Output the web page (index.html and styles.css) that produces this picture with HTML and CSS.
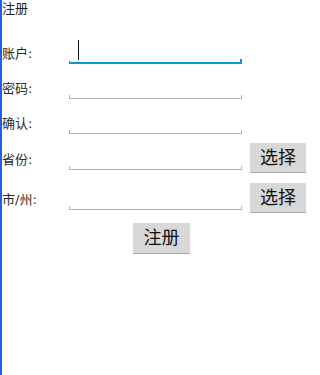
FILE: index.html
```html
<!DOCTYPE html>
<html lang="zh">
<head>
<meta charset="utf-8">
<title>注册</title>
<link rel="stylesheet" href="styles.css">
</head>
<body>
<div class="screen">
  <div class="title">注册</div>
  <div class="form">
    <div class="row r1">
      <span class="label">账户:</span>
      <div class="field focused"><span class="caret"></span></div>
    </div>
    <div class="row r2">
      <span class="label">密码:</span>
      <div class="field"></div>
    </div>
    <div class="row r3">
      <span class="label">确认:</span>
      <div class="field"></div>
    </div>
    <div class="row r4">
      <span class="label">省份:</span>
      <div class="field"></div>
      <button class="btn">选择</button>
    </div>
    <div class="row r5">
      <span class="label">市/州:</span>
      <div class="field"></div>
      <button class="btn">选择</button>
    </div>
    <div class="submit-row">
      <button class="btn submit">注册</button>
    </div>
  </div>
</div>
</body>
</html>
```

FILE: styles.css
```css
html, body {
  margin: 0;
  padding: 0;
  background: #ffffff;
}

.screen {
  box-sizing: border-box;
  width: 310px;
  height: 375px;
  border-left: 2px solid #1f5ff0;
  font-family: "DejaVu Sans", "Noto Sans CJK SC", sans-serif;
  color: #222222;
  overflow: hidden;
}

.title {
  font-size: 13px;
  line-height: 18px;
  height: 18px;
  padding-top: 0;
}

.form {
  display: flex;
  flex-direction: column;
  margin-top: 19px;
}

.row {
  display: flex;
  align-items: center;
  height: 30px;
}

.r2, .r3 { margin-top: 5px; }
.r4 { margin-top: 6px; }
.r5 { margin-top: 10px; }

.label {
  width: 67px;
  flex: none;
  font-size: 13px;
  line-height: 16px;
  padding-top: 4px;
  color: #2a2a2a;
}

.field {
  box-sizing: border-box;
  width: 173px;
  height: 24px;
  flex: none;
  background:
    linear-gradient(#b4b4b4, #b4b4b4) left bottom / 1px 4px no-repeat,
    linear-gradient(#b4b4b4, #b4b4b4) right bottom / 1px 4px no-repeat,
    linear-gradient(#b4b4b4, #b4b4b4) left bottom / 100% 1px no-repeat;
}

.field.focused {
  background:
    linear-gradient(#0a9ad0, #0a9ad0) left bottom / 1px 3px no-repeat,
    linear-gradient(#0a9ad0, #0a9ad0) right bottom / 2px 5px no-repeat,
    linear-gradient(#0a9ad0, #0a9ad0) left bottom / 100% 2px no-repeat;
  padding-left: 9px;
}

.caret {
  display: block;
  width: 1px;
  height: 20px;
  background: #111111;
}

.btn {
  box-sizing: border-box;
  margin: 0 0 0 8px;
  width: 56px;
  height: 30px;
  padding: 0;
  border: none;
  border-bottom: 1px solid #a9a9a9;
  background: #d8d8d8;
  font-family: "DejaVu Sans", "Noto Sans CJK SC", sans-serif;
  font-size: 18px;
  line-height: 28px;
  color: #111111;
}

.submit-row {
  display: flex;
  margin-top: 10px;
}

.submit {
  margin-left: 131px;
  width: 57px;
  height: 31px;
}
```
